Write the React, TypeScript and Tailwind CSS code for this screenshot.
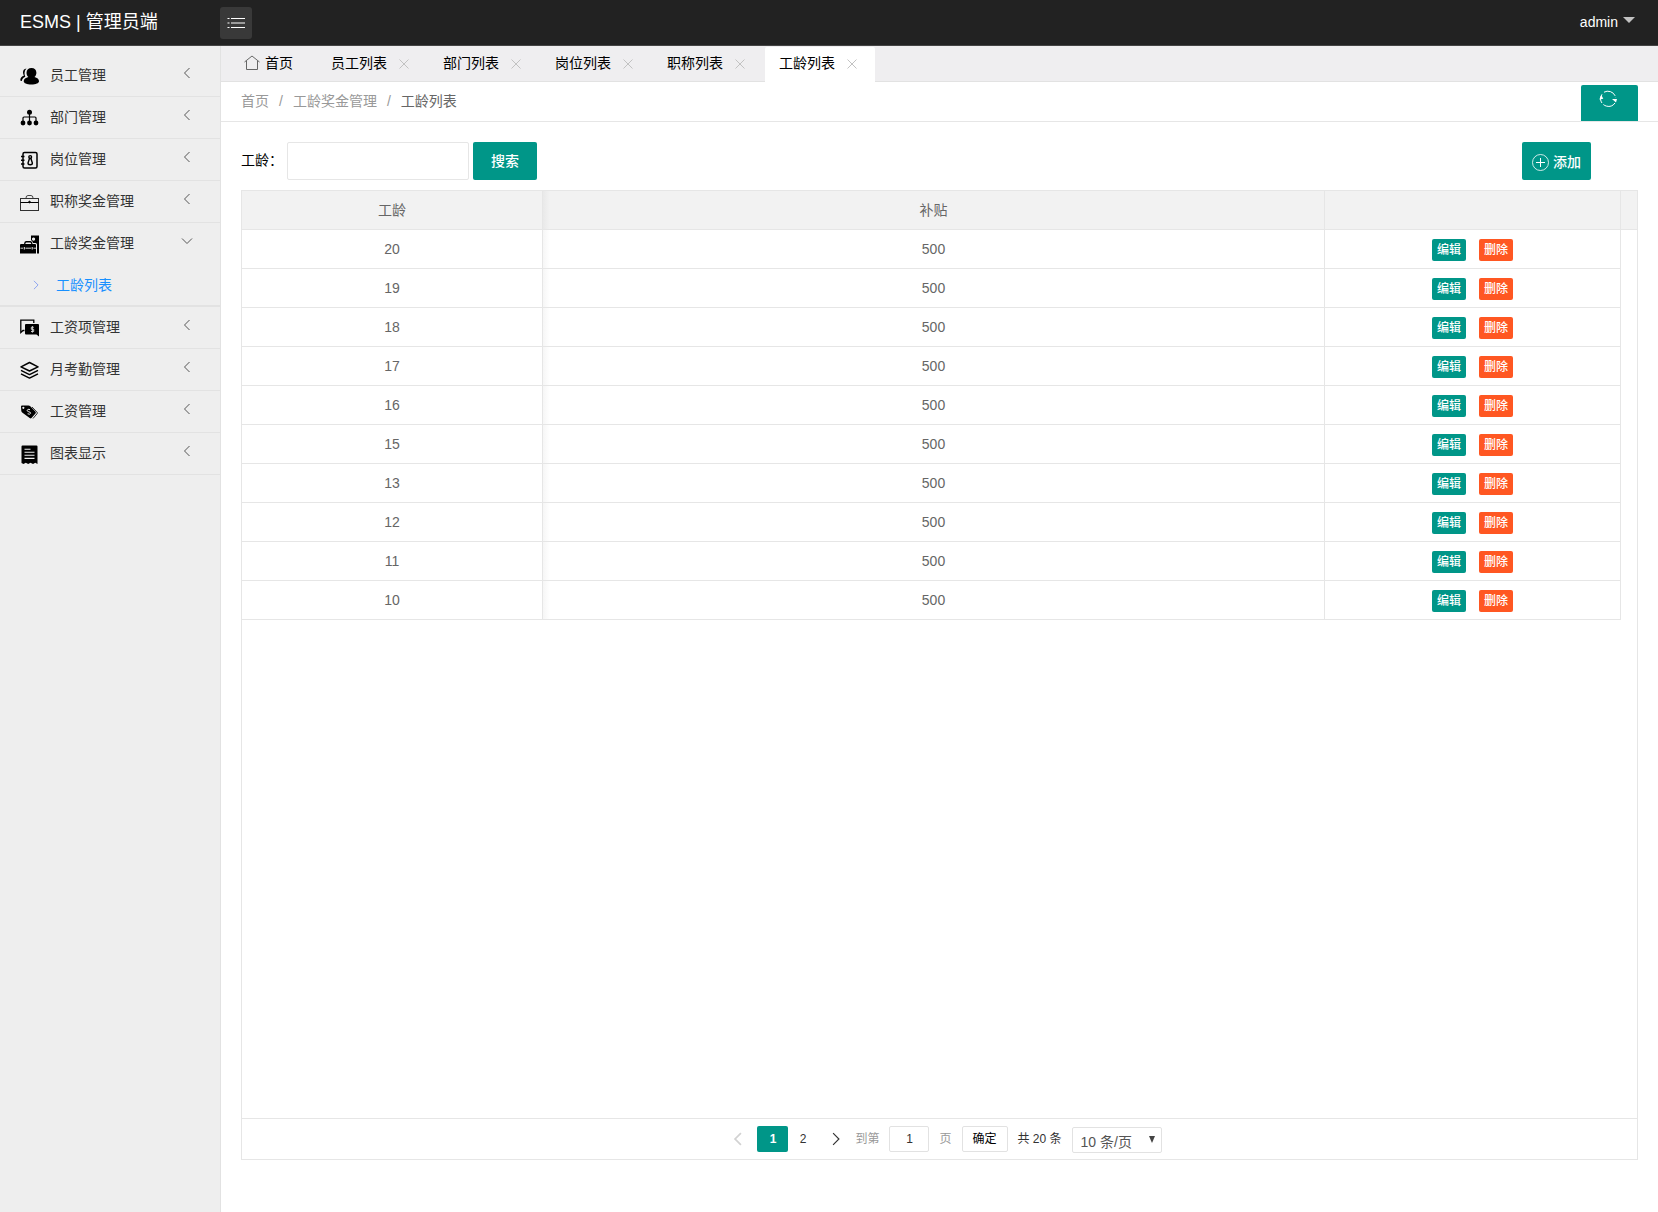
import { ReactNode, useState } from 'react';
import clsx from 'clsx';

type IconName =
  | 'users'
  | 'sitemap'
  | 'contacts'
  | 'briefcase'
  | 'toolbox'
  | 'money'
  | 'layers'
  | 'tag'
  | 'receipt';

interface MenuItem {
  label: string;
  icon: IconName;
  children?: string[];
}

const MENU: MenuItem[] = [
  { label: '员工管理', icon: 'users' },
  { label: '部门管理', icon: 'sitemap' },
  { label: '岗位管理', icon: 'contacts' },
  { label: '职称奖金管理', icon: 'briefcase' },
  { label: '工龄奖金管理', icon: 'toolbox', children: ['工龄列表'] },
  { label: '工资项管理', icon: 'money' },
  { label: '月考勤管理', icon: 'layers' },
  { label: '工资管理', icon: 'tag' },
  { label: '图表显示', icon: 'receipt' },
];

const TABS = ['员工列表', '部门列表', '岗位列表', '职称列表', '工龄列表'];

const ROWS = [20, 19, 18, 17, 16, 15, 13, 12, 11, 10].map((years) => ({ years, allowance: 500 }));

const ICONS: Record<IconName, ReactNode> = {
  users: (
    <>
      <path d="M11.5 1c3 0 4.900 1.900 4.900 4.800 0 1.900-.8 3.300-1.900 4.300 2.700.6 4.500 2.200 4.500 4.200 0 2-3.100 3.200-7.600 3.200s-7.700-1.200-7.700-3.200c0-2 2-3.600 4.700-4.200-1.200-1-1.900-2.400-1.900-4.300C6.500 2.900 8.500 1 11.500 1z" />
      <path d="M6.500 1.600C4 1.800 3 3.400 3 5.400c0 1.300.4 2.400 1 3.200C1.800 9.300.4 10.900.3 12.900c0 .7.600 1 1.500 1.100.2-2 1.500-3.500 3.500-4.300C4 7.200 4.300 3.700 6.500 1.600z" />
    </>
  ),
  sitemap: (
    <>
      <circle cx="9.500" cy="3.200" r="2.500" />
      <circle cx="3" cy="14" r="2.400" />
      <circle cx="9.500" cy="14" r="2.400" />
      <circle cx="16" cy="14" r="2.400" />
      <path d="M9.500 4v10M3 13V9q0-1 1-1h11q1 0 1 1v4" fill="none" stroke="currentColor" strokeWidth="1.200" />
    </>
  ),
  contacts: (
    <>
      <rect x="3" y="1.500" width="14" height="15.500" rx="1.500" fill="none" stroke="currentColor" strokeWidth="1.500" />
      <path d="M1 5.500h3.500M1 9.300h3.500M1 13h3.500" stroke="currentColor" strokeWidth="1.500" />
      <circle cx="10.200" cy="6" r="1.400" fill="none" stroke="currentColor" strokeWidth="1.400" />
      <path d="M9.500 7.500h1.400l1.500 4.500q0 1.800-2.200 1.800T8 12z" fill="none" stroke="currentColor" strokeWidth="1.400" />
    </>
  ),
  briefcase: (
    <g fill="none" stroke="currentColor">
      <rect x="0.500" y="5.500" width="18" height="12" strokeOpacity="0.800" />
      <path d="M6 5q0-2.500 2-2.500h3q2 0 2 2.500" strokeOpacity="0.700" />
      <path d="M0.500 9.500h18" />
      <circle cx="9.500" cy="9" r="0.800" fill="currentColor" />
    </g>
  ),
  toolbox: (
    <>
      <path fillRule="evenodd" d="M11 0.500h8v18h-2v-9q0-1.500-1.500-1.500H13Q12.500 6 11 5zM13.500 2.500a1.600 1.600 0 1 0 .1 0z" />
      <path fillRule="evenodd" d="M1 9h3q.3-3 2-3h4.500q1.700 0 2 3H15q1 0 1 1v8.500H0V10q0-1 1-1zM5.300 9h6q-.2-1.500-1-1.500h-4q-.8 0-1 1.500z" />
      <path d="M0.500 13.200H3M5.500 13.200h5.500M13.500 13.200H16" stroke="#eee" strokeWidth="0.900" />
      <path d="M4.300 12v2.500M12.200 12v2.500" stroke="#eee" />
    </>
  ),
  money: (
    <>
      <path d="M4.500 11.500H3l-2.200 2V1.200h13V4" fill="none" stroke="currentColor" strokeWidth="1.300" />
      <path d="M6 5h12q1 0 1 1v11.500L16.500 15.500H6q-1 0-1-1V6q0-1 1-1z" />
      <path d="M13.800 8.300h-2.500v2h2.400v2.200h-2.700M12.400 7v6.700" fill="none" stroke="#ddd" strokeWidth="0.900" />
    </>
  ),
  layers: (
    <g fill="none" stroke="currentColor" strokeWidth="1.500" strokeLinejoin="round">
      <path d="M9.500 1.500 18 5.800 9.500 10 1 5.800z" />
      <path d="M1 9.300l8.500 4.300L18 9.300M1 12.800l8.500 4.300 8.500-4.300" />
    </g>
  ),
  tag: (
    <>
      <path
        fillRule="evenodd"
        d="M1 3.500q0-1 1-1h6.500q1 0 1.800.8l5.200 5.500q.8.900 0 1.700l-4 4.500q-.9.800-1.800 0L2.500 9.800Q1.500 8.900 1.300 8zM3.300 3.700a1.100 1.100 0 1 0 .1 0z"
      />
      <path d="M12 4l5 5.200q.8.800 0 1.600l-4 4.700" fill="none" stroke="currentColor" strokeWidth="1" strokeOpacity="0.800" />
      <path d="M10 6.700Q7.600 5.500 7.200 7.300q-.1 1.200 1.600 1.500 1.900.3 1.800 1.500-.5 1.500-3 .5" fill="none" stroke="#eee" />
    </>
  ),
  receipt: (
    <>
      <path d="M2.500.5h14q1 0 1 1v17.500l-2.200-1.200-2.300 1.200-2.500-1.200-2.300 1.200L5.800 17.800 3.500 19l-2-1V1.500q0-1 1-1z" />
      <path d="M4.500 4.200h6M4.500 7.200h10M4.500 10.300h10M4.500 13.400h10" stroke="#eee" strokeWidth="1.100" />
    </>
  ),
};

function MenuIcon({ name }: { name: IconName }) {
  return (
    <svg className="mt-1 h-5 w-[19px] shrink-0 text-black" viewBox="0 0 19 20" fill="currentColor" aria-hidden="true">
      {ICONS[name]}
    </svg>
  );
}

function Chevron({ className, points }: { className: string; points: string }) {
  return (
    <svg className={className} viewBox="0 0 12 12" fill="none" stroke="currentColor" aria-hidden="true">
      <polyline points={points} />
    </svg>
  );
}

const LEFT = '8.500,1 3.500,6 8.500,11';
const RIGHT = '3.500,1 8.500,6 3.500,11';
const DOWN = '1,3.500 6,8.500 11,3.500';

function Header() {
  return (
    <header className="flex h-[46px] shrink-0 items-start border-b border-[#444] bg-[#222] text-white">
      <h1 className="w-[220px] pl-5 text-lg leading-[45px]">ESMS | 管理员端</h1>
      <button type="button" aria-label="菜单" className="mt-[7px] flex size-8 items-center justify-center rounded-[3px] bg-[#393939]">
        <svg className="size-[18px]" viewBox="0 0 18 18" stroke="#fff" aria-hidden="true">
          <path d="M4 4.500h14M4 9h14M4 13.500h14M0.500 4.500h2M0.500 9h2M0.500 13.500h2" />
        </svg>
      </button>
      <button type="button" className="mr-[23px] ml-auto flex items-start gap-[5px] text-sm leading-[45px]">
        admin
        <span className="mt-[17px] border-x-6 border-t-6 border-x-transparent border-t-[#c2c2c2]" />
      </button>
    </header>
  );
}

function Sidebar() {
  return (
    <nav className="w-[221px] shrink-0 border-r border-[#e2e2e2] bg-[#eee] pt-[9px]">
      <ul>
        {MENU.map((item) => (
          <li key={item.label} className="border-b border-[#e2e2e2]">
            <button type="button" className="flex h-[41px] w-full items-center pb-[2px] pl-5 text-left text-sm text-[#333]">
              <MenuIcon name={item.icon} />
              <span className="ml-[11px] flex-1">{item.label}</span>
              <Chevron className="mr-[27px] mb-1 size-3 text-[#555]" points={item.children ? DOWN : LEFT} />
            </button>
            {item.children?.map((child) => (
              <a key={child} href="#" className="flex h-[42px] items-center border-b border-[#e2e2e2] pl-[31px] text-sm text-[#1890ff]">
                <Chevron className="mr-[15px] size-[10px] text-[#7c98f0]" points={RIGHT} />
                {child}
              </a>
            ))}
          </li>
        ))}
      </ul>
    </nav>
  );
}

function TabBar() {
  const [active, setActive] = useState('工龄列表');

  return (
    <div className="flex h-9 shrink-0 items-end gap-[2px] border-b border-[#e2e2e2] bg-[#efeef0] pl-2 text-sm text-black">
      <button type="button" className="flex h-[34px] w-[86px] items-center gap-[5px] pb-[2px] pl-[15px]">
        <svg className="size-4" viewBox="0 0 16 16" fill="none" stroke="#666" aria-hidden="true">
          <path d="M0.500 7 8 1l7.500 6M2.500 6v8.500h11V6" />
        </svg>
        首页
      </button>
      {TABS.map((tab) => (
        <div
          key={tab}
          className={clsx(
            'flex w-[110px] items-center rounded-t-[2px] pl-[14px]',
            tab === active ? '-mb-px h-[35px] bg-white pb-[3px]' : 'h-[34px] pb-[2px]',
          )}
        >
          <button type="button" className="leading-8" onClick={() => setActive(tab)}>{tab}</button>
          <button type="button" aria-label={`关闭${tab}`} className="mt-[2px] ml-3">
            <svg className="size-[10px]" viewBox="0 0 10 10" stroke="#c2c2c2" aria-hidden="true">
              <path d="M0.500.5l9 9M9.500.5l-9 9" />
            </svg>
          </button>
        </div>
      ))}
    </div>
  );
}

function Breadcrumb() {
  return (
    <div className="flex h-10 shrink-0 items-end justify-between border-b border-[#e6e6e6] px-5">
      <div className="flex gap-[10px] text-sm leading-10 text-[#999]">
        <a href="#">首页</a>
        <span>/</span>
        <a href="#">工龄奖金管理</a>
        <span>/</span>
        <span className="text-[#666]">工龄列表</span>
      </div>
      <button type="button" aria-label="刷新" className="flex h-9 w-[57px] justify-center rounded-t-[2px] bg-[#009688] pt-[5px] pr-[3px]">
        <svg className="size-[18px]" viewBox="0 0 18 18" fill="none" stroke="#fff" aria-hidden="true">
          <path d="M5 2.200A8 8 0 0 1 16.800 8M16 13A8 8 0 0 1 1.500 9M1.500 9A8 8 0 0 1 3 4.300" strokeDasharray="13 2" />
          <path d="M0.300 9.500 2.300 5l2 3.800zM13 9h5l-1 3.500z" fill="#fff" stroke="none" />
        </svg>
      </button>
    </div>
  );
}

function SearchBar() {
  return (
    <form className="flex h-[38px] items-center text-sm">
      <label htmlFor="years" className="w-[46px] pb-[2px] text-black">工龄：</label>
      <input id="years" type="text" className="h-full w-[182px] rounded-[2px] border border-[#e6e6e6] px-[10px]" />
      <button type="button" className="ml-1 h-full w-16 rounded-[2px] bg-[#009688] font-medium text-white">搜索</button>
      <button type="button" className="mr-[47px] ml-auto flex h-full w-[69px] items-center justify-center gap-1 rounded-[2px] bg-[#009688] pt-[2px] font-medium text-white">
        <svg className="size-[17px]" viewBox="0 0 17 17" fill="none" stroke="#fff" aria-hidden="true">
          <circle cx="8.500" cy="8.500" r="8" strokeOpacity="0.800" />
          <path d="M4 8.500h9M8.500 4v9" />
        </svg>
        添加
      </button>
    </form>
  );
}

function Pagination() {
  return (
    <div className="flex h-[41px] items-start justify-center border-t border-[#e6e6e6] pt-[7px] pl-[14px] text-xs leading-[26px] text-[#333]">
      <button type="button" aria-label="上一页" className="mr-3 flex h-[26px] items-center text-[#d2d2d2]">
        <Chevron className="size-[14px] stroke-[1.5]" points={LEFT} />
      </button>
      <button type="button" className="h-[26px] w-[31px] rounded-[2px] bg-[#009688] font-bold text-white">1</button>
      <button type="button" className="h-[26px] w-[29px]">2</button>
      <button type="button" aria-label="下一页" className="ml-3 flex h-[26px] items-center">
        <Chevron className="size-[14px]" points={RIGHT} />
      </button>
      <label htmlFor="page" className="ml-3 text-[#999]">到第</label>
      <input id="page" type="text" defaultValue="1" className="mx-[10px] h-[26px] w-10 rounded-[2px] border border-[#e2e2e2] text-center" />
      <span className="text-[#999]">页</span>
      <button type="button" className="ml-[10px] h-[26px] w-[46px] rounded-[2px] border border-[#e2e2e2] leading-6 text-black">确定</button>
      <span className="mx-[10px]">共 20 条</span>
      <div className="relative mt-px">
        <select
          aria-label="每页条数"
          className="h-[26px] w-[90px] appearance-none rounded-[2px] border border-[#e2e2e2] bg-white pt-1 pl-2 text-sm leading-5 text-[#555]"
        >
          <option>10 条/页</option>
          <option>20 条/页</option>
        </select>
        <svg className="pointer-events-none absolute top-[9px] right-[7px] h-[7px] w-[6px]" viewBox="0 0 6 7" fill="#444" aria-hidden="true">
          <path d="M0 0h6L3 7z" />
        </svg>
      </div>
    </div>
  );
}

function YearsTable() {
  return (
    <div className="mt-[10px] flex min-h-0 flex-1 flex-col border border-[#e6e6e6]">
      <div className="flex-1">
        <table className="w-full table-fixed border-separate border-spacing-0 text-center text-sm text-[#666]">
          <colgroup>
            <col className="w-[301px]" />
            <col />
            <col className="w-[296px]" />
            <col className="w-4" />
          </colgroup>
          <thead>
            <tr className="h-[39px] bg-[#f2f2f2]">
              <th className="border-r border-b border-[#e6e6e6] font-normal">工龄</th>
              <th className="border-r border-b border-[#e6e6e6] bg-[linear-gradient(to_right,#e9e9e9,#f2f2f2_7px)] font-normal">补贴</th>
              <th className="border-r border-b border-[#e6e6e6]" />
              <th className="border-b border-[#e6e6e6]" />
            </tr>
          </thead>
          <tbody>
            {ROWS.map((row) => (
              <tr key={row.years} className="h-[39px]">
                <td className="border-r border-b border-[#e6e6e6]">{row.years}</td>
                <td className="border-r border-b border-[#e6e6e6] bg-[linear-gradient(to_right,#f6f6f6,#fff_7px)]">{row.allowance}</td>
                <td className="border-r border-b border-[#e6e6e6]">
                  <div className="flex justify-center gap-[13px] pt-[2px] text-xs font-medium text-white">
                    <button type="button" className="h-[22px] w-[34px] rounded-[2px] bg-[#009688]">编辑</button>
                    <button type="button" className="h-[22px] w-[34px] rounded-[2px] bg-[#ff5722]">删除</button>
                  </div>
                </td>
                <td />
              </tr>
            ))}
          </tbody>
        </table>
      </div>
      <Pagination />
    </div>
  );
}

export default function App() {
  return (
    <div className="flex min-h-screen flex-col bg-white font-['Liberation_Sans','Noto_Sans_CJK_SC',sans-serif]">
      <Header />
      <div className="flex flex-1">
        <Sidebar />
        <main className="flex min-w-0 flex-1 flex-col">
          <TabBar />
          <Breadcrumb />
          <section className="flex flex-1 flex-col px-5 pt-5 pb-[52px]">
            <SearchBar />
            <YearsTable />
          </section>
        </main>
      </div>
    </div>
  );
}
